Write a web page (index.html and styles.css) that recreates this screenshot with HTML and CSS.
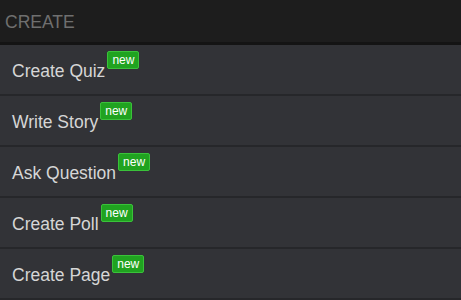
FILE: index.html
```html
<!DOCTYPE html>
<html>
<head>
<meta charset="utf-8">
<link rel="stylesheet" href="styles.css">
</head>
<body>
<div class="menu">
  <div class="menu-header">CREATE</div>
  <div class="menu-item"><span class="label">Create Quiz</span><span class="badge">new</span></div>
  <div class="menu-item"><span class="label">Write Story</span><span class="badge">new</span></div>
  <div class="menu-item"><span class="label">Ask Question</span><span class="badge">new</span></div>
  <div class="menu-item"><span class="label">Create Poll</span><span class="badge">new</span></div>
  <div class="menu-item"><span class="label">Create Page</span><span class="badge">new</span></div>
</div>
</body>
</html>
```
FILE: styles.css
```css
html, body {
  margin: 0;
  padding: 0;
  background: #323337;
  font-family: "Liberation Sans", Arial, sans-serif;
}
.menu {
  width: 461px;
  height: 300px;
  overflow: hidden;
  display: flex;
  flex-direction: column;
}
.menu-header {
  flex: none;
  height: 45px;
  box-sizing: border-box;
  padding: 12px 0 0 5px;
  background: #1d1d1d;
  color: #6f6f6f;
  font-size: 17.5px;
  line-height: 20px;
  border-bottom: 3px solid #141414;
}
.menu-item {
  flex: none;
  display: flex;
  align-items: flex-start;
  padding: 6px 0 0 12px;
  box-sizing: border-box;
  height: 51px;
  border-bottom: 2px solid #26272a;
  background: #323337;
}
.label {
  margin-top: 10px;
  font-size: 17.5px;
  line-height: 20px;
  color: #d6d6d6;
}
.badge {
  margin-left: 2px;
  background: #20a320;
  border: 1px solid #3ac23a;
  border-radius: 2px;
  color: #ffffff;
  font-size: 12px;
  line-height: 16px;
  padding: 0 4px;
}
```
